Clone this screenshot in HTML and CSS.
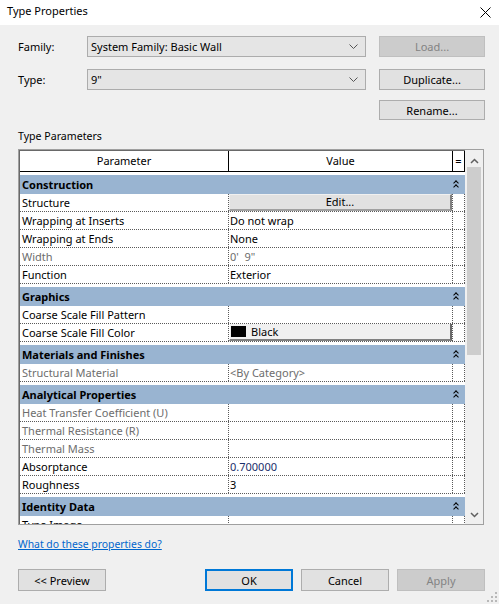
FILE: index.html
```html
<!DOCTYPE html>
<html lang="en">
<head>
    <meta charset="UTF-8">
    <title>Type Properties</title>
    <link rel="stylesheet" href="styles.css">
</head>
<body>

    <!-- Title bar -->
    <div class="title-bar">
        <span>Type Properties</span>
        <svg class="close" width="11" height="11" viewBox="0 0 11 11">
            <path d="M0.5 0.5 L10.5 10.5 M10.5 0.5 L0.5 10.5" stroke="#000" stroke-width="1" fill="none"/>
        </svg>
    </div>

    <div class="content">
        <!-- Family / Type -->
        <div class="field-row">
            <label class="field-label">Family:</label>
            <div class="combo">
                <span>System Family: Basic Wall</span>
                <svg width="9" height="5" viewBox="0 0 9 5"><path d="M0.5 0.5 L4.5 4.5 L8.5 0.5" stroke="#555" fill="none"/></svg>
            </div>
            <button class="btn" disabled>Load...</button>
        </div>
        <div class="field-row">
            <label class="field-label">Type:</label>
            <div class="combo">
                <span>9"</span>
                <svg width="9" height="5" viewBox="0 0 9 5"><path d="M0.5 0.5 L4.5 4.5 L8.5 0.5" stroke="#555" fill="none"/></svg>
            </div>
            <button class="btn">Duplicate...</button>
        </div>
        <div class="field-row rename-row">
            <button class="btn">Rename...</button>
        </div>

        <div class="section-label">Type Parameters</div>

        <!-- Parameter grid -->
        <div class="grid-frame">
            <div class="grid">
                <div class="grid-head">
                    <div class="c1">Parameter</div>
                    <div class="c2">Value</div>
                    <div class="c3">=</div>
                </div>

                <div class="group">
                    <div class="group-head"><span>Construction</span><i class="fold"></i></div>
                    <div class="row"><div class="c1">Structure</div><div class="c2"><div class="cell-btn">Edit...</div></div><div class="c3"></div></div>
                    <div class="row"><div class="c1">Wrapping at Inserts</div><div class="c2">Do not wrap</div><div class="c3"></div></div>
                    <div class="row"><div class="c1">Wrapping at Ends</div><div class="c2">None</div><div class="c3"></div></div>
                    <div class="row off"><div class="c1">Width</div><div class="c2">0'&nbsp; 9"</div><div class="c3"></div></div>
                    <div class="row"><div class="c1">Function</div><div class="c2">Exterior</div><div class="c3"></div></div>
                </div>

                <div class="group">
                    <div class="group-head"><span>Graphics</span><i class="fold"></i></div>
                    <div class="row"><div class="c1">Coarse Scale Fill Pattern</div><div class="c2"></div><div class="c3"></div></div>
                    <div class="row"><div class="c1">Coarse Scale Fill Color</div><div class="c2"><div class="color-btn"><span class="swatch"></span>Black</div></div><div class="c3"></div></div>
                </div>

                <div class="group">
                    <div class="group-head"><span>Materials and Finishes</span><i class="fold"></i></div>
                    <div class="row off"><div class="c1">Structural Material</div><div class="c2">&lt;By Category&gt;</div><div class="c3"></div></div>
                </div>

                <div class="group">
                    <div class="group-head"><span>Analytical Properties</span><i class="fold"></i></div>
                    <div class="row off"><div class="c1">Heat Transfer Coefficient (U)</div><div class="c2"></div><div class="c3"></div></div>
                    <div class="row off"><div class="c1">Thermal Resistance (R)</div><div class="c2"></div><div class="c3"></div></div>
                    <div class="row off"><div class="c1">Thermal Mass</div><div class="c2"></div><div class="c3"></div></div>
                    <div class="row"><div class="c1">Absorptance</div><div class="c2 num">0.700000</div><div class="c3"></div></div>
                    <div class="row"><div class="c1">Roughness</div><div class="c2">3</div><div class="c3"></div></div>
                </div>

                <div class="group">
                    <div class="group-head"><span>Identity Data</span><i class="fold"></i></div>
                    <div class="row"><div class="c1">Type Image</div><div class="c2"></div><div class="c3"></div></div>
                </div>
            </div>

            <!-- Scrollbar -->
            <div class="scrollbar">
                <svg class="arrow" width="9" height="6" viewBox="0 0 9 6"><path d="M1 5 L4.5 1.5 L8 5" stroke="#606060" stroke-width="1.5" fill="none"/></svg>
                <div class="thumb"></div>
                <svg class="arrow down" width="9" height="6" viewBox="0 0 9 6"><path d="M1 1 L4.5 4.5 L8 1" stroke="#606060" stroke-width="1.5" fill="none"/></svg>
            </div>
        </div>

        <a class="help-link" href="#">What do these properties do?</a>

        <div class="button-row">
            <button class="btn">&lt;&lt; Preview</button>
            <div class="spacer"></div>
            <button class="btn default">OK</button>
            <button class="btn">Cancel</button>
            <button class="btn" disabled>Apply</button>
        </div>
    </div>

    <svg class="grip" width="10" height="10" viewBox="0 0 10 10" fill="#b8b8b8">
        <rect x="8" y="0" width="2" height="2"/>
        <rect x="4" y="4" width="2" height="2"/><rect x="8" y="4" width="2" height="2"/>
        <rect x="0" y="8" width="2" height="2"/><rect x="4" y="8" width="2" height="2"/><rect x="8" y="8" width="2" height="2"/>
    </svg>

</body>
</html>
```

FILE: styles.css
```css
* {
    margin: 0;
    padding: 0;
    box-sizing: border-box;
}

body {
    width: 499px;
    height: 604px;
    overflow: hidden;
    position: relative;
    background-color: #F0F0F0;
    font-family: "Noto Sans", "Open Sans", sans-serif;
    font-size: 11px;
    color: #000;
}

/* Title bar */
.title-bar {
    height: 25px;
    background-color: #FFFFFF;
    display: flex;
    align-items: center;
    justify-content: space-between;
    padding: 0 8px 5px 7px;
    font-size: 11px;
}

.close {
    margin-top: 4px;
}

.content {
    padding: 11px 14px 0 18px;
}

/* Family / Type rows */
.field-row {
    display: flex;
    align-items: center;
    height: 21px;
    margin-bottom: 12px;
}

.field-label {
    width: 69px;
}

.combo {
    width: 279px;
    height: 21px;
    margin-right: 13px;
    background-color: #E5E5E5;
    border: 1px solid #ACACAC;
    display: flex;
    align-items: center;
    justify-content: space-between;
    padding: 0 7px 1px 3px;
}

.btn {
    width: 106px;
    height: 21px;
    background-color: #E1E1E1;
    border: 1px solid #ADADAD;
    font-family: inherit;
    font-size: inherit;
    color: #000;
}

.btn:disabled {
    background-color: #CCCCCC;
    border-color: #BFBFBF;
    color: #838383;
}

.rename-row {
    justify-content: flex-end;
    height: 20px;
    margin-top: -2px;
    margin-bottom: 0;
}

.rename-row .btn {
    height: 20px;
}

.section-label {
    height: 16px;
    line-height: 16px;
    margin-top: 8px;
    font-size: 10.6px;
}

/* Parameter grid */
.grid-frame {
    margin-top: 5px;
    width: 466px;
    height: 376px;
    border: 1px solid #A0A0A0;
    display: flex;
}

.grid {
    width: 446px;
    height: 374px;
    overflow: hidden;
    background-color: #FFFFFF;
    border-left: 1px solid #696969;
    border-top: 1px solid #696969;
}

.grid-head {
    display: flex;
    height: 21px;
    border-bottom: 1px solid #000;
}

.grid-head > div {
    display: flex;
    align-items: center;
    justify-content: center;
    border-right: 1px solid #000;
    padding-bottom: 1px;
}

.c1 {
    width: 209px;
    flex-shrink: 0;
}

.c2 {
    width: 224px;
    flex-shrink: 0;
}

.c3 {
    width: 12px;
    flex-shrink: 0;
}

.group {
    margin-top: 3px;
}

.group-head {
    height: 19px;
    width: 445px;
    background-color: #99B4D1;
    font-weight: bold;
    display: flex;
    align-items: center;
    justify-content: space-between;
    padding: 0 7px 1px 2px;
}

.fold {
    width: 5px;
    height: 8px;
    position: relative;
}

.fold::before,
.fold::after {
    content: "";
    position: absolute;
    left: 0;
    width: 3px;
    height: 3px;
    border-left: 1.5px solid #000;
    border-top: 1.5px solid #000;
    transform: translateX(1px) rotate(45deg);
}

.fold::before {
    top: 1px;
}

.fold::after {
    top: 5px;
}

.row {
    display: flex;
    height: 18px;
    border-bottom: 1px dotted #5A5A5A;
}

.row > div {
    display: flex;
    align-items: center;
    border-right: 1px dotted #5A5A5A;
    white-space: nowrap;
    overflow: hidden;
    padding-bottom: 1px;
}

.row .c1 {
    padding-left: 2px;
}

.row .c2 {
    padding-left: 1px;
}

.row.off {
    color: #6D6D6D;
}

.num {
    color: #1A2F6B;
}

.cell-btn {
    width: 223px;
    height: 17px;
    margin-left: -1px;
    background-color: #E1E1E1;
    border: 1px solid #F0F0F0;
    border-right: 2px solid #808080;
    border-bottom: 2px solid #A0A0A0;
    display: flex;
    align-items: center;
    justify-content: center;
}

.color-btn {
    width: 224px;
    height: 18px;
    margin-left: -1px;
    background-color: #F0F0F0;
    border: 1px solid #FFFFFF;
    border-right: 2px solid #696969;
    border-bottom: 2px solid #808080;
    display: flex;
    align-items: center;
    padding-left: 1px;
}

.swatch {
    width: 15px;
    height: 11px;
    background-color: #000;
    margin-right: 5px;
}

/* Scrollbar */
.scrollbar {
    width: 18px;
    height: 374px;
    background-color: #F0F0F0;
    display: flex;
    flex-direction: column;
    align-items: center;
    padding-top: 8px;
}

.thumb {
    width: 14px;
    height: 188px;
    margin-top: 3px;
    background-color: #CDCDCD;
}

.arrow.down {
    margin-top: auto;
    margin-bottom: 6px;
}

/* Footer */
.help-link {
    display: block;
    margin-top: 11px;
    height: 16px;
    line-height: 16px;
    font-size: 10.4px;
    color: #0066CC;
    text-decoration: underline;
    width: max-content;
}

.button-row {
    display: flex;
    gap: 8px;
    margin-top: 17px;
}

.button-row .btn {
    width: 88px;
    height: 22px;
}

.button-row .spacer {
    flex: 1;
}

.btn.default {
    border: 2px solid #0078D7;
}

.grip {
    position: absolute;
    right: 2px;
    bottom: 2px;
}
```
